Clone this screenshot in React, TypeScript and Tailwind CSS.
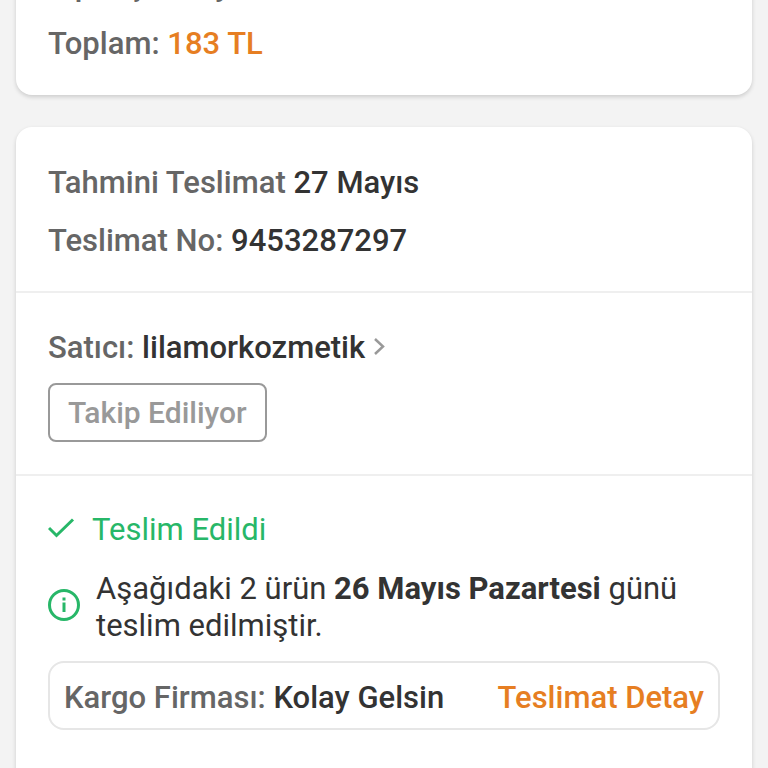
import { type ReactNode } from "react";

function Card({ children, className = "" }: { children: ReactNode; className?: string }) {
  return (
    <section className={`rounded-2xl bg-white shadow-[0_2px_4px_rgba(0,0,0,0.16)] ${className}`}>
      {children}
    </section>
  );
}

function Field({ label, value, accent = false }: { label: string; value?: string; accent?: boolean }) {
  return (
    <p className="font-medium text-[#666666]">
      {label} {value && <span className={accent ? "text-[#e67e22]" : "text-[#333333]"}>{value}</span>}
    </p>
  );
}

export default function App() {
  return (
    <main className="h-screen overflow-hidden bg-[#f3f3f3] px-4 font-[Roboto,sans-serif] text-[31px] leading-[36px]">
      {/* Order summary */}
      <Card className="-mt-16 flex flex-col gap-[22px] px-8 pt-8 pb-[33px]">
        <Field label="Sipariş Detayı:" />
        <Field label="Toplam:" value="183 TL" accent />
      </Card>

      {/* Delivery */}
      <Card className="mt-8 divide-y-2 divide-[#efefef]">
        <div className="flex flex-col gap-[22px] px-8 pt-[38px] pb-8">
          <Field label="Tahmini Teslimat" value="27 Mayıs" />
          <Field label="Teslimat No:" value="9453287297" />
        </div>

        <div className="px-8 pt-[37px] pb-8">
          <a href="#satici" className="flex items-center gap-2">
            <Field label="Satıcı:" value="lilamorkozmetik" />
            <svg viewBox="0 0 12 20" className="h-5 w-3" fill="none" stroke="#999999" strokeWidth="2.5">
              <path d="M2 1l8 7.5L2 16" />
            </svg>
          </a>
          <button
            type="button"
            className="mt-[17px] h-[59px] rounded-lg border-2 border-[#999999] px-[18px] text-[30px] font-medium text-[#999999]"
          >
            Takip Ediliyor
          </button>
        </div>

        <div className="px-8 pt-9 pb-16">
          <div className="flex items-center gap-4 text-[#27b768]">
            <svg viewBox="0 0 28 24" className="h-6 w-7" fill="none" stroke="currentColor" strokeWidth="3">
              <path d="M1 10l7.5 7.5L25 1.5" />
            </svg>
            <h2>Teslim Edildi</h2>
          </div>

          <div className="mt-[22px] flex items-center gap-4 text-[#333333]">
            <svg viewBox="0 0 32 32" className="-mt-1 size-8 shrink-0 text-[#27b768]" fill="none" stroke="currentColor">
              <circle cx="16" cy="16" r="14.5" strokeWidth="3" />
              <path d="M16 13.5v9.5M16 8.5v3" strokeWidth="3" />
            </svg>
            <p className="leading-[37px]">
              Aşağıdaki 2 ürün <strong className="font-bold">26 Mayıs Pazartesi</strong> günü teslim edilmiştir.
            </p>
          </div>

          <div className="mt-[17px] flex h-[69px] items-center justify-between rounded-2xl border-2 border-[#e6e6e6] px-[14px] pt-1">
            <Field label="Kargo Firması:" value="Kolay Gelsin" />
            <a href="#detay" className="font-medium text-[#e67e22]">Teslimat Detay</a>
          </div>
        </div>
      </Card>
    </main>
  );
}
